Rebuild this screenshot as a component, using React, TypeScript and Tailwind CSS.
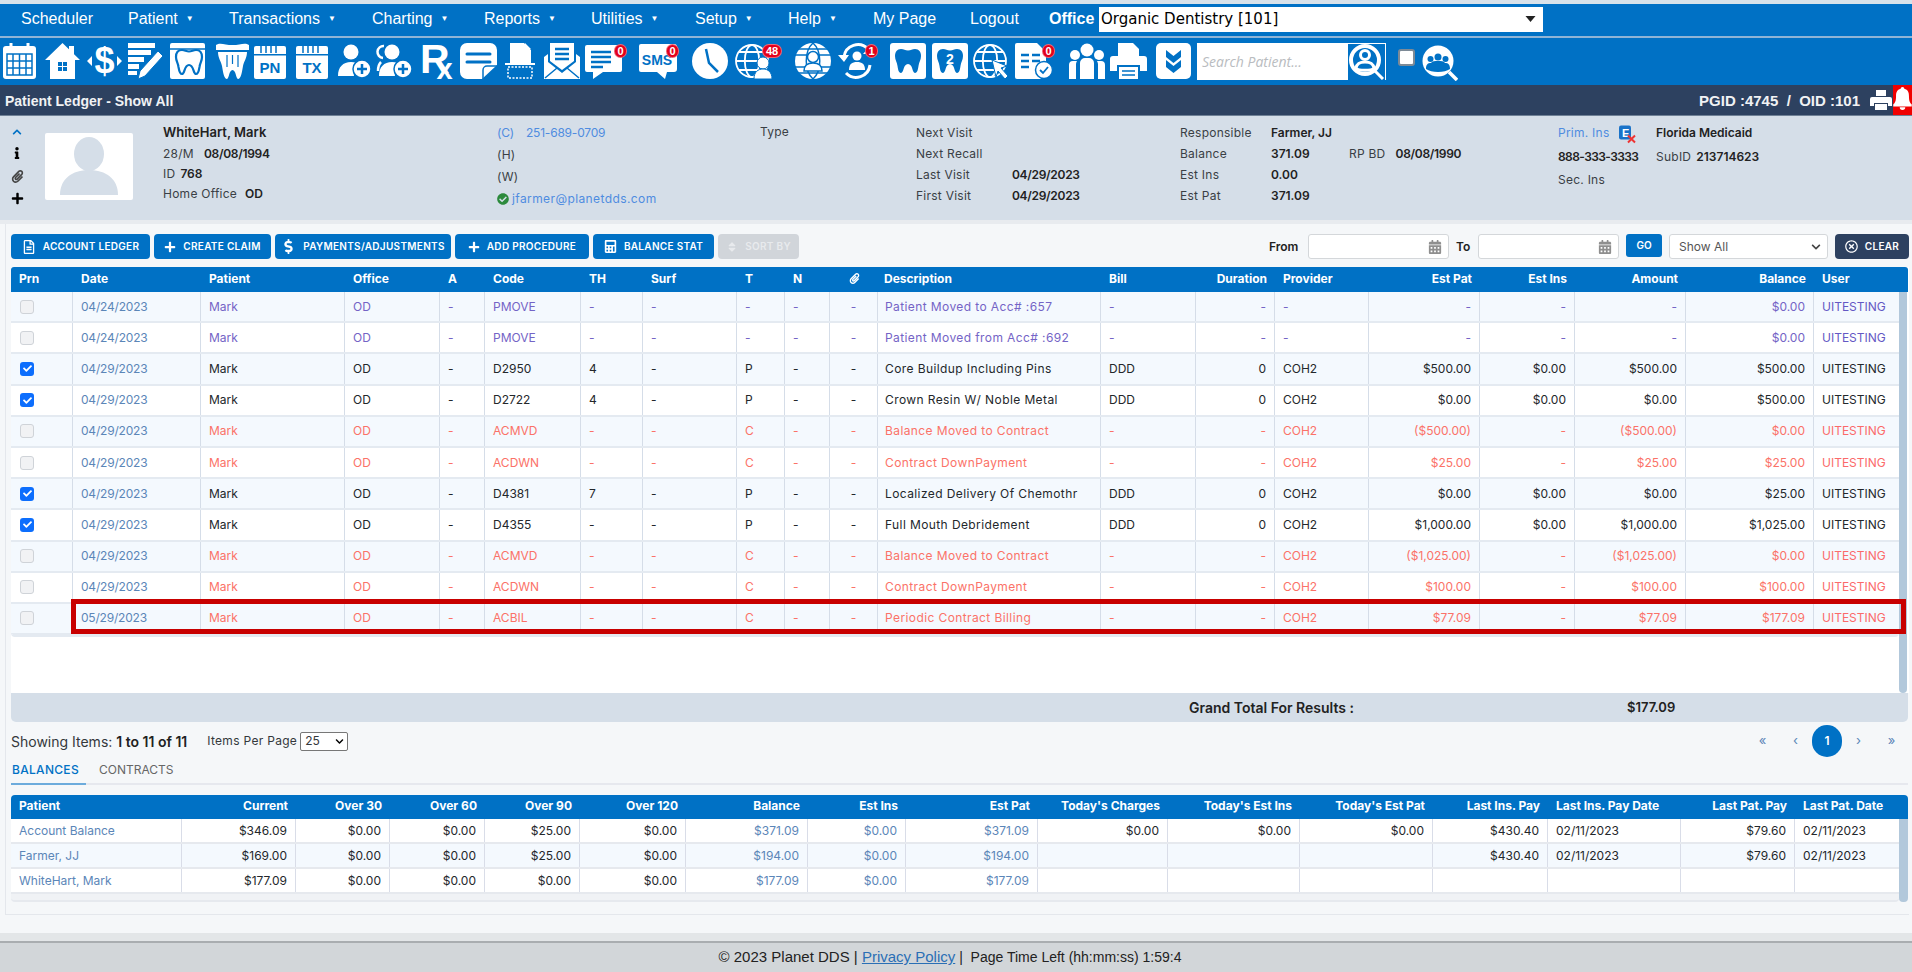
import type { ReactNode } from 'react';
import {
  FaCalculator,
  FaCalendarAlt,
  FaCheck,
  FaCheckCircle,
  FaChevronDown,
  FaChevronUp,
  FaDollarSign,
  FaInfo,
  FaPaperclip,
  FaPlus,
  FaRegFileAlt,
  FaRegTimesCircle,
  FaSort,
} from 'react-icons/fa';

const BLUE = '#0071c5';

// column tracks shared by header and rows of the ledger
const ledgerCols =
  'grid grid-cols-[62px_128px_144px_95px_45px_96px_62px_94px_48px_45px_48px_223px_95px_79px_94px_111px_95px_111px_128px_85px]';
const balanceCols =
  'grid grid-cols-[171px_114px_94px_95px_95px_106px_122px_98px_132px_130px_132px_133px_115px_133px_114px_104px]';

type Kind = 'moved' | 'proc' | 'contract';

interface Row {
  kind: Kind;
  date: string;
  code: string;
  th?: string;
  t: string;
  desc: string;
  bill: string;
  dur: string;
  prov: string;
  estPat: string;
  estIns: string;
  amount: string;
  bal: string;
}

const rows: Row[] = [
  { kind: 'moved', date: '04/24/2023', code: 'PMOVE', t: '-', desc: 'Patient Moved to Acc# :657', bill: '-', dur: '-', prov: '-', estPat: '-', estIns: '-', amount: '-', bal: '$0.00' },
  { kind: 'moved', date: '04/24/2023', code: 'PMOVE', t: '-', desc: 'Patient Moved from Acc# :692', bill: '-', dur: '-', prov: '-', estPat: '-', estIns: '-', amount: '-', bal: '$0.00' },
  { kind: 'proc', date: '04/29/2023', code: 'D2950', th: '4', t: 'P', desc: 'Core Buildup Including Pins', bill: 'DDD', dur: '0', prov: 'COH2', estPat: '$500.00', estIns: '$0.00', amount: '$500.00', bal: '$500.00' },
  { kind: 'proc', date: '04/29/2023', code: 'D2722', th: '4', t: 'P', desc: 'Crown Resin W/ Noble Metal', bill: 'DDD', dur: '0', prov: 'COH2', estPat: '$0.00', estIns: '$0.00', amount: '$0.00', bal: '$500.00' },
  { kind: 'contract', date: '04/29/2023', code: 'ACMVD', t: 'C', desc: 'Balance Moved to Contract', bill: '-', dur: '-', prov: 'COH2', estPat: '($500.00)', estIns: '-', amount: '($500.00)', bal: '$0.00' },
  { kind: 'contract', date: '04/29/2023', code: 'ACDWN', t: 'C', desc: 'Contract DownPayment', bill: '-', dur: '-', prov: 'COH2', estPat: '$25.00', estIns: '-', amount: '$25.00', bal: '$25.00' },
  { kind: 'proc', date: '04/29/2023', code: 'D4381', th: '7', t: 'P', desc: 'Localized Delivery Of Chemothr', bill: 'DDD', dur: '0', prov: 'COH2', estPat: '$0.00', estIns: '$0.00', amount: '$0.00', bal: '$25.00' },
  { kind: 'proc', date: '04/29/2023', code: 'D4355', t: 'P', desc: 'Full Mouth Debridement', bill: 'DDD', dur: '0', prov: 'COH2', estPat: '$1,000.00', estIns: '$0.00', amount: '$1,000.00', bal: '$1,025.00' },
  { kind: 'contract', date: '04/29/2023', code: 'ACMVD', t: 'C', desc: 'Balance Moved to Contract', bill: '-', dur: '-', prov: 'COH2', estPat: '($1,025.00)', estIns: '-', amount: '($1,025.00)', bal: '$0.00' },
  { kind: 'contract', date: '04/29/2023', code: 'ACDWN', t: 'C', desc: 'Contract DownPayment', bill: '-', dur: '-', prov: 'COH2', estPat: '$100.00', estIns: '-', amount: '$100.00', bal: '$100.00' },
  { kind: 'contract', date: '05/29/2023', code: 'ACBIL', t: 'C', desc: 'Periodic Contract Billing', bill: '-', dur: '-', prov: 'COH2', estPat: '$77.09', estIns: '-', amount: '$77.09', bal: '$177.09' },
];

const kindColor: Record<Kind, string> = {
  moved: 'text-[#7464c6]',
  proc: 'text-[#23272b]',
  contract: 'text-[#fb7268]',
};

const balances = [
  ['Account Balance', '$346.09', '$0.00', '$0.00', '$25.00', '$0.00', '$371.09', '$0.00', '$371.09', '$0.00', '$0.00', '$0.00', '$430.40', '02/11/2023', '$79.60', '02/11/2023'],
  ['Farmer, JJ', '$169.00', '$0.00', '$0.00', '$25.00', '$0.00', '$194.00', '$0.00', '$194.00', '', '', '', '$430.40', '02/11/2023', '$79.60', '02/11/2023'],
  ['WhiteHart, Mark', '$177.09', '$0.00', '$0.00', '$0.00', '$0.00', '$177.09', '$0.00', '$177.09', '', '', '', '', '', '', ''],
];

const balanceHeads = ['Patient', 'Current', 'Over 30', 'Over 60', 'Over 90', 'Over 120', 'Balance', 'Est Ins', 'Est Pat', "Today's Charges", "Today's Est Ins", "Today's Est Pat", 'Last Ins. Pay', 'Last Ins. Pay Date', 'Last Pat. Pay', 'Last Pat. Date'];

const tooth =
  'M11 7c-4 0-6 3-6 7 0 4 2 6 2.500 10 .5 3 1 7 3.500 7 3 0 2-9 7-9s4 9 7 9c2.500 0 3-4 3.500-7 .5-4 2.500-6 2.500-10 0-4-2-7-6-7-3 0-4 1.500-7 1.500S14 7 11 7z';

function Svg({ children, w = 36 }: { children: ReactNode; w?: number }) {
  return (
    <svg viewBox={`0 0 ${w} 36`} width={w} height={36} fill="#fff" className="overflow-visible">
      {children}
    </svg>
  );
}

function CalendarTile({ label }: { label: string }) {
  return (
    <Svg w={34}>
      <rect x="1" y="3" width="32" height="33" rx="2" />
      <path d="M8 0v10M13 0v10M18 0v10M23 0v10" stroke={BLUE} strokeWidth="1.500" />
      <rect x="1" y="11" width="32" height="1.500" fill={BLUE} />
      <text x="17" y="30" textAnchor="middle" fontSize="15" fontWeight="700" fontFamily="Liberation Sans, sans-serif" fill={BLUE}>
        {label}
      </text>
    </Svg>
  );
}

function Globe({ x = 18, r = 17 }: { x?: number; r?: number }) {
  return (
    <g fill="none" stroke="#fff" strokeWidth="1.800">
      <circle cx={x} cy="18" r={r} />
      <ellipse cx={x} cy="18" rx={r * 0.45} ry={r} />
      <path d={`M${x - r} 18h${r * 2}M${x - r + 3} 9h${r * 2 - 6}M${x - r + 3} 27h${r * 2 - 6}`} />
    </g>
  );
}

function PersonPlus({ two }: { two?: boolean }) {
  return (
    <Svg>
      {two && <path d="M7 3a6 6 0 0 0-1 12M4 19c-2 2-3 5-3 9" fill="none" stroke="#fff" strokeWidth="2.500" />}
      <circle cx="15" cy="9" r="7.500" />
      <path d="M2 33c0-9 5-14 13-14 4 0 7 1 9 3-5 2-7 6-6 11z" />
      <circle cx="26" cy="26" r="9" fill="#fff" stroke={BLUE} strokeWidth="1.500" />
      <path d="M26 21v10M21 26h10" stroke={BLUE} strokeWidth="2.500" />
    </Svg>
  );
}

const icons: { className: string; node: ReactNode; badge?: { text: string; className: string } }[] = [
  {
    className: 'ml-[3px] w-[33px]',
    node: (
      <Svg w={33}>
        <rect x="0" y="3" width="33" height="33" rx="3" />
        <path d="M8 0v8M25 0v8" stroke="#fff" strokeWidth="3" />
        <path d="M4 11h25v21H4zM4 18h25M4 25h25M10 11v21M16.500 11v21M23 11v21" fill="none" stroke={BLUE} strokeWidth="1.500" />
      </Svg>
    ),
  },
  {
    className: 'ml-[9px] w-[35px]',
    node: (
      <Svg w={35}>
        <path d="M17.500 0 35 17h-5v19H5V17H0zM24 3h5v9l-5-5z" />
        <rect x="13" y="19" width="9" height="9" fill={BLUE} />
        <path d="M17.500 19v9M13 23.500h9" stroke="#fff" strokeWidth="1" />
      </Svg>
    ),
  },
  {
    className: 'ml-[7px] w-[35px]',
    node: (
      <Svg w={35}>
        <text x="17.500" y="30" textAnchor="middle" fontSize="36" fontWeight="700" fontFamily="Liberation Sans, sans-serif">
          $
        </text>
        <path d="M0 18l5-5v10zM35 18l-5-5v10z" />
      </Svg>
    ),
  },
  {
    className: 'ml-[6px] w-[35px]',
    node: (
      <Svg w={35}>
        <path d="M0 0h27v5H0zM0 7h23v5H0zM0 14h16v5H0zM0 21h11v5H0zM0 28h9v4H0z" />
        <path d="M30 8l5 5-18 20-7 3 2-8z" stroke={BLUE} strokeWidth="1" />
      </Svg>
    ),
  },
  {
    className: 'ml-[7px] w-[35px]',
    node: (
      <Svg w={35}>
        <rect x="0" y="0" width="35" height="36" rx="2" />
        <path d="M0 6h35" stroke={BLUE} strokeWidth="1.500" />
        <path d={tooth} fill="#fff" stroke={BLUE} strokeWidth="2.200" transform="translate(1 0)" />
      </Svg>
    ),
  },
  {
    className: 'ml-[10px] w-[35px]',
    node: (
      <Svg w={35}>
        <path d="M1 2c4-3 9 0 16.500 0S30-1 34 2v5H1z" />
        <path d="M3 9h29c0 6-3 9-4 14-1 6-2 13-5 13-2 0-2-9-5.500-9S14 36 12 36c-3 0-4-7-5-13C6 18 3 15 3 9z" />
        <path d="M12 12v12M17.500 12v9M23 12v12" stroke={BLUE} strokeWidth="1.200" />
      </Svg>
    ),
  },
  { className: 'ml-[3px] w-[34px]', node: <CalendarTile label="PN" /> },
  { className: 'ml-[8px] w-[34px]', node: <CalendarTile label="TX" /> },
  { className: 'ml-[7px] w-[36px]', node: <PersonPlus /> },
  { className: 'ml-[5px] w-[36px]', node: <PersonPlus two /> },
  {
    className: 'ml-[7px] w-[33px]',
    node: (
      <Svg w={34}>
        <text x="0" y="30" fontSize="41" fontWeight="700" fontFamily="Liberation Sans, sans-serif">
          R
          <tspan dx="-13" dy="6" fontSize="29">
            x
          </tspan>
        </text>
      </Svg>
    ),
  },
  {
    className: 'ml-[7px] w-[37px]',
    node: (
      <Svg w={37}>
        <path d="M7 0h23a7 7 0 0 1 7 7v15L22 36H7a7 7 0 0 1-7-7V7a7 7 0 0 1 7-7z" />
        <path d="M7 11h23M7 19h23" stroke={BLUE} strokeWidth="3" strokeLinecap="round" />
        <path d="M37 23H27a4 4 0 0 0-4 4v9" fill="none" stroke={BLUE} strokeWidth="1.500" />
      </Svg>
    ),
  },
  {
    className: 'ml-[8px] w-[30px]',
    node: (
      <Svg w={30}>
        <path d="M5 0h14l7 7v13H5zM20 0l6 6h-6z" />
        <path d="M0 20h30v2H0z" />
        <rect x="3" y="24" width="24" height="11" fill="none" stroke="#fff" strokeWidth="1.500" strokeDasharray="2 1.500" />
      </Svg>
    ),
  },
  {
    className: 'ml-[9px] w-[36px]',
    node: (
      <Svg>
        <path d="M6 0h24v18l-12 9-12-9z" />
        <path d="M11 6h14M11 11h14M11 16h14" stroke={BLUE} strokeWidth="2.500" />
        <path d="M0 14l4-3v8l14 11 14-11v-8l4 3v22H0z" />
        <path d="M1 35l12-10M35 35L23 25" stroke={BLUE} strokeWidth="1.500" />
      </Svg>
    ),
  },
  {
    className: 'ml-[5px] w-[40px]',
    node: (
      <Svg w={40}>
        <path d="M2 2h33a2 2 0 0 1 2 2v23a2 2 0 0 1-2 2H18L8 36v-7H2a2 2 0 0 1-2-2V4a2 2 0 0 1 2-2z" />
        <path d="M6 9h20M6 14h20M6 19h20M6 24h12" stroke={BLUE} strokeWidth="2.500" />
      </Svg>
    ),
    badge: { text: '0', className: 'right-[-2px] w-[13px]' },
  },
  {
    className: 'ml-[14px] w-[39px]',
    node: (
      <Svg w={39}>
        <path d="M2 1h33a3 3 0 0 1 3 3v22a3 3 0 0 1-3 3H28l-2 7-8-7H2a2 2 0 0 1-2-2V3a2 2 0 0 1 2-2z" />
        <text x="18" y="22" textAnchor="middle" fontSize="14" fontWeight="700" fontFamily="Liberation Sans, sans-serif" fill={BLUE}>
          SMS
        </text>
      </Svg>
    ),
    badge: { text: '0', className: 'right-[-1px] w-[13px]' },
  },
  {
    className: 'ml-[14px] w-[36px]',
    node: (
      <Svg>
        <circle cx="18" cy="18" r="18" />
        <path d="M14 6l3 14 9 9" fill="none" stroke={BLUE} strokeWidth="2.500" />
      </Svg>
    ),
  },
  {
    className: 'ml-[7px] w-[46px]',
    node: (
      <Svg w={46}>
        <Globe x={17} r={16} />
        <circle cx="28" cy="20" r="6" stroke={BLUE} />
        <path d="M19 36c0-7 4-10 9-10s9 3 9 10z" stroke={BLUE} />
      </Svg>
    ),
    badge: { text: '48', className: 'right-[-1px] w-[20px]' },
  },
  {
    className: 'ml-[14px] w-[36px]',
    node: (
      <Svg>
        <circle cx="18" cy="18" r="18" />
        <path d="M0 12h36M0 24h36M3 6h30M3 30h30M18 0c-9 8-9 28 0 36M18 0c9 8 9 28 0 36" fill="none" stroke={BLUE} strokeWidth="1.500" />
        <circle cx="18" cy="14" r="5.500" stroke={BLUE} strokeWidth="1.500" />
        <path d="M9 28c0-6 4-8 9-8s9 2 9 8z" stroke={BLUE} strokeWidth="1.500" />
      </Svg>
    ),
  },
  {
    className: 'ml-[7px] w-[39px]',
    node: (
      <Svg w={39}>
        <path d="M6 14A14 14 0 0 1 30 6M32 22A14 14 0 0 1 8 30" fill="none" stroke="#fff" strokeWidth="3" />
        <path d="M0 12h11l-5 7zM33 2v9h-8z" />
        <circle cx="19" cy="13" r="4.500" />
        <path d="M11 27c0-6 3-8 8-8s8 2 8 8z" />
      </Svg>
    ),
    badge: { text: '1', className: 'right-[-1px] w-[13px]' },
  },
  {
    className: 'ml-[13px] w-[36px]',
    node: (
      <Svg>
        <rect width="36" height="36" rx="3" />
        <path d={tooth} fill={BLUE} transform="translate(0 -1)" />
      </Svg>
    ),
  },
  {
    className: 'ml-[6px] w-[36px]',
    node: (
      <Svg>
        <rect width="36" height="36" rx="3" />
        <path d={tooth} fill={BLUE} transform="translate(0 -1)" />
        <text x="18" y="21" textAnchor="middle" fontSize="14" fontWeight="700" fontFamily="Liberation Sans, sans-serif" fill="#fff">
          2
        </text>
      </Svg>
    ),
  },
  {
    className: 'ml-[5px] w-[36px]',
    node: (
      <Svg>
        <Globe x={17} r={16} />
        <path d="M19 17l15 6-6 2 7 8-3 3-7-8-2 6z" stroke={BLUE} />
      </Svg>
    ),
  },
  {
    className: 'ml-[6px] w-[39px]',
    node: (
      <Svg w={39}>
        <path d="M2 0h20l9 9v27H2a2 2 0 0 1-2-2V2a2 2 0 0 1 2-2z" />
        <path d="M6 12h8M17 12h8M6 18h8M17 18h8M6 24h8" stroke={BLUE} strokeWidth="2.500" />
        <circle cx="29" cy="27" r="8.500" stroke={BLUE} strokeWidth="1.500" />
        <path d="M25 27l3 3 5-6" fill="none" stroke={BLUE} strokeWidth="1.800" />
      </Svg>
    ),
    badge: { text: '0', className: 'right-[-1px] w-[13px]' },
  },
  {
    className: 'ml-[15px] w-[36px]',
    node: (
      <Svg>
        <circle cx="18" cy="7" r="6.500" />
        <circle cx="6" cy="12" r="5" />
        <circle cx="30" cy="12" r="5" />
        <path d="M11 36V20a5 5 0 0 1 5-5h4a5 5 0 0 1 5 5v16zM0 36V22a4 4 0 0 1 4-4h4a7 7 0 0 0-1 3v15zM36 36V22a4 4 0 0 0-4-4h-4a7 7 0 0 1 1 3v15z" />
      </Svg>
    ),
  },
  {
    className: 'ml-[5px] w-[37px]',
    node: (
      <Svg w={37}>
        <path d="M8 0h15l6 6v7H8z" />
        <path d="M3 13h31a3 3 0 0 1 3 3v12h-7v-6H7v6H0V16a3 3 0 0 1 3-3z" />
        <path d="M9 24h19v12H9z" />
        <path d="M12 28h13M12 32h13" stroke={BLUE} strokeWidth="1.500" />
      </Svg>
    ),
  },
  {
    className: 'ml-[9px] w-[35px]',
    node: (
      <Svg w={35}>
        <rect width="35" height="36" rx="5" />
        <path d="M10 7l7.500 6 7.500-6v7l-7.500 6-7.500-6zM10 17l7.500 6 7.500-6v7l-7.500 6-7.500-6z" fill={BLUE} />
      </Svg>
    ),
  },
];

function NavItem({ label, caret, className }: { label: string; caret?: boolean; className: string }) {
  return (
    <span className={`flex shrink-0 items-center ${className}`}>
      {label}
      {caret && <span className="ml-[8px] text-[8px]">▼</span>}
    </span>
  );
}

function Btn({ icon, label, className }: { icon: ReactNode; label: string; className: string }) {
  return (
    <button className={`flex h-[25px] items-center justify-center gap-[7px] rounded-[4px] bg-[#0071c5] text-[10px] font-semibold tracking-[0.3px] text-white ${className}`}>
      {icon}
      {label}
    </button>
  );
}

function Info({ label, value, className = '' }: { label: string; value?: string; className?: string }) {
  return (
    <div className={`flex h-[21px] items-center ${className}`}>
      <span className="w-[96px] shrink-0">{label}</span>
      <span className="font-semibold tracking-[-0.3px] text-[#222]">{value}</span>
    </div>
  );
}

function DateBox({ className }: { className: string }) {
  return (
    <div className={`flex h-[25px] items-center justify-end rounded-[3px] border border-[#d4d7da] bg-white pr-[6px] ${className}`}>
      <FaCalendarAlt className="text-[14px] text-[#8e8e8e]" />
    </div>
  );
}

const ledgerHeads: [string, boolean][] = [
  ['Prn', false], ['Date', false], ['Patient', false], ['Office', false], ['A', false], ['Code', false], ['TH', false], ['Surf', false], ['T', false], ['N', false], ['', false],
  ['Description', false], ['Bill', false], ['Duration', true], ['Provider', false], ['Est Pat', true], ['Est Ins', true], ['Amount', true], ['Balance', true], ['User', false],
];

function Ledger() {
  return (
    <div className="relative bg-white">
      <div className={`${ledgerCols} h-[25px] w-[1897px] items-center rounded-t-[3px] bg-[#0071c5] pb-[2px] text-[12px] font-bold text-white`}>
        {ledgerHeads.map(([h, right], i) => (
          <div key={i} className={`${i === 11 ? 'pl-[6px]' : 'px-2'} ${right ? 'text-right' : ''}`}>
            {i === 10 ? <FaPaperclip className="mx-auto text-[11px]" /> : h}
          </div>
        ))}
      </div>
      <div className="flex h-[401px] items-start">
        <div className="w-[1888px] overflow-hidden rounded-b-[4px] border-b-2 border-[#e4eaf1]">
          {rows.map((r, i) => {
            const tone = kindColor[r.kind];
            const cells: string[] = ['Mark', 'OD', '-', r.code, r.th ?? '-', '-', r.t, '-'];
            const tail: [string, boolean][] = [
              [r.bill, false], [r.dur, true], [r.prov, false], [r.estPat, true], [r.estIns, true], [r.amount, true], [r.bal, true],
            ];
            return (
              <div key={i} className={`${ledgerCols} h-[31.2px] border-b-2 border-[#e4eaf1] ${i % 2 === 0 ? 'bg-[#f4f9fe]' : 'bg-white'} ${tone}`}>
                <div className="flex items-center border-r border-[#d5dde8] pl-[9px]">
                  {r.kind === 'proc' ? (
                    <span className="flex h-[14px] w-[14px] items-center justify-center rounded-[3px] bg-[#0d6efd] text-[9px] text-white">
                      <FaCheck />
                    </span>
                  ) : (
                    <span className="h-[14px] w-[14px] rounded-[3px] border border-[#cfd3d8] bg-[#f1f2f4]" />
                  )}
                </div>
                <div className="flex items-center border-r border-[#d5dde8] pl-[8px] tracking-[-0.2px] text-[#5b86b8]">{r.date}</div>
                {cells.map((c, j) => (
                  <div key={j} className="flex items-center border-r border-[#d5dde8] pl-[8px]">
                    {c}
                  </div>
                ))}
                <div className="flex items-center justify-center border-r border-[#d5dde8]">-</div>
                <div className="flex items-center border-r border-[#d5dde8] pl-[7px] tracking-[0.4px]">{r.desc}</div>
                {tail.map(([c, right], j) => (
                  <div key={j} className={`flex items-center border-r border-[#d5dde8] px-[8px] ${right ? 'justify-end' : ''}`}>
                    {c}
                  </div>
                ))}
                <div className="flex items-center pl-[8px] text-[#6458c4]">{r.kind === 'contract' ? <span className="text-[#fb6a6a]">UITESTING</span> : r.kind === 'proc' ? <span className="text-[#23272b]">UITESTING</span> : 'UITESTING'}</div>
              </div>
            );
          })}
        </div>
        <div className="h-full w-[8px] rounded-b-[4px] bg-[#b2c8db]" />
      </div>
      {/* highlight drawn over the last row */}
      <div className="absolute left-[60px] top-[332px] h-[35px] w-[1835px] border-[5px] border-[#c80000]" />
    </div>
  );
}

function Balances() {
  return (
    <div>
      <div className={`${balanceCols} h-[24px] w-[1897px] items-center rounded-t-[4px] bg-[#0071c5] pb-[2px] text-[12px] font-bold text-white`}>
        {balanceHeads.map((h, i) => (
          <div key={h} className={`whitespace-nowrap px-2 ${i === 0 || i === 13 || i === 15 ? '' : 'text-right'}`}>
            {h}
          </div>
        ))}
      </div>
      <div className="flex items-stretch">
        <div className="w-[1888px] rounded-b-[4px] border-b-2 border-[#e6e9ee] bg-[#f0f2f5] pb-[6px]">
          {balances.map((row, i) => (
            <div key={i} className={`${balanceCols} h-[25px] border-b-2 border-[#e6e9ee] ${i === 1 ? 'bg-[#f4f9fe]' : 'bg-white'}`}>
              {row.map((c, j) => {
                const blue = j === 0 || j === 6 || j === 7 || j === 8;
                const left = j === 0 || j === 13 || j === 15;
                return (
                  <div key={j} className={`flex items-center px-[8px] ${left ? '' : 'justify-end'} ${j < 15 ? 'border-r border-[#d9dde8]' : ''} ${blue ? 'text-[#5b86b8]' : 'text-[#23272b]'}`}>
                    {c}
                  </div>
                );
              })}
            </div>
          ))}
        </div>
        <div className="w-[9px] rounded-b-[4px] bg-[#b2c8db]" />
      </div>
    </div>
  );
}

export default function App() {
  return (
    <div className="flex h-[972px] w-[1912px] flex-col overflow-hidden bg-[#f5f7f9] font-[Inter,sans-serif] text-[12px] text-[#34383c]">
      <div className="h-[4px] bg-[#d8e2ea]" />

      {/* main menu */}
      <nav className="flex h-[32px] items-center bg-[#0071c5] pb-[2px] font-['Liberation_Sans',sans-serif] text-[16px] text-white">
        <NavItem label="Scheduler" className="ml-[21px] w-[107px]" />
        <NavItem label="Patient" caret className="w-[101px]" />
        <NavItem label="Transactions" caret className="w-[143px]" />
        <NavItem label="Charting" caret className="w-[112px]" />
        <NavItem label="Reports" caret className="w-[107px]" />
        <NavItem label="Utilities" caret className="w-[104px]" />
        <NavItem label="Setup" caret className="w-[93px]" />
        <NavItem label="Help" caret className="w-[85px]" />
        <NavItem label="My Page" className="w-[97px]" />
        <NavItem label="Logout" className="w-[79px]" />
        <span className="w-[50px] shrink-0 font-bold">Office</span>
        <div className="flex h-[25px] w-[444px] items-center justify-between bg-white pl-[2px] pr-[7px] font-['DejaVu_Sans',sans-serif] text-[15px] text-black">
          Organic Dentistry [101]
          <svg viewBox="0 0 10 6" className="h-[6px] w-[11px]">
            <path d="M0 0h10L5 6z" fill="#222" />
          </svg>
        </div>
      </nav>
      <div className="h-[2px] bg-[#8fb4d6]" />

      {/* shortcut icons */}
      <div className="flex h-[47px] items-start bg-[#0071c5] pt-[5px]">
        {icons.map((ic, i) => (
          <div key={i} className={`relative h-[36px] shrink-0 ${ic.className}`}>
            {ic.node}
            {ic.badge && (
              <span className={`absolute top-[1px] flex h-[14px] items-center justify-center rounded-full border border-white/40 bg-[#e3001b] font-['Liberation_Sans',sans-serif] text-[11px] font-bold text-white ${ic.badge.className}`}>
                {ic.badge.text}
              </span>
            )}
          </div>
        ))}
        <div className="ml-[6px] flex h-[37px] w-[189px] items-center justify-between border border-white bg-white pl-[4px] font-['Open_Sans',sans-serif] text-[14px] italic text-[#b9bcc0]">
          Search Patient...
          <div className="h-[36px] w-[37px] bg-[#0071c5]">
            <svg viewBox="0 0 37 36" width={37} height={36}>
              <circle cx="17" cy="16" r="14" fill="none" stroke="#fff" strokeWidth="4" />
              <circle cx="17" cy="11" r="4.500" fill="none" stroke="#fff" strokeWidth="3" />
              <path d="M8 24c1-5 4-6 9-6s8 1 9 6c-2 3-16 3-18 0z" fill="none" stroke="#fff" strokeWidth="3" />
              <path d="M27 27l8 8" stroke="#fff" strokeWidth="3" />
            </svg>
          </div>
        </div>
        <span className="ml-[12px] mt-[6px] h-[17px] w-[17px] rounded-[3px] border-2 border-[#7d8a96] bg-white" />
        <div className="ml-[7px] mt-[2px] h-[36px] w-[36px]">
          <svg viewBox="0 0 36 36" width={36} height={36}>
            <circle cx="16" cy="16" r="15.500" fill="#fff" />
            <circle cx="16" cy="12" r="3.500" fill={BLUE} />
            <circle cx="8.500" cy="14" r="3" fill={BLUE} />
            <circle cx="23.500" cy="14" r="3" fill={BLUE} />
            <path d="M4 24c0-5 2-6 5-6 1-2 4-2 7-2s6 0 7 2c3 0 5 1 5 6-3 2-7 3-12 3S7 26 4 24z" fill={BLUE} />
            <path d="M27 27l8 8" stroke="#fff" strokeWidth="3.500" />
          </svg>
        </div>
      </div>

      {/* page title */}
      <div className="flex h-[31px] items-center justify-between border-b border-[#6f8196] bg-[#2d4160] pl-[5px] font-['Liberation_Sans',sans-serif] text-[14px] font-bold text-[#f0f2f4]">
        <span className="pt-[3px]">Patient Ledger - Show All</span>
        <div className="flex items-center">
          <span className="mr-[10px] whitespace-pre pt-[3px] text-[15px]">PGID :4745  /  OID :101</span>
          <svg viewBox="0 0 22 22" className="mr-[1px] h-[22px] w-[22px]" fill="#fff">
            <path d="M6 1h10v6H6zM2 8h18a2 2 0 0 1 2 2v7h-4v-3H4v3H0v-7a2 2 0 0 1 2-2zM5 15h12v6H5z" />
          </svg>
          <div className="flex h-[30px] w-[19px] justify-center overflow-hidden bg-[#f00000] pt-[2px]">
            <svg viewBox="0 0 20 26" className="h-[24px] w-[19px] shrink-0" fill="#fff">
              <path d="M10 0a2 2 0 0 1 2 2c4 1 5 4 5 8 0 5 1 7 3 9v2H0v-2c2-2 3-4 3-9 0-4 1-7 5-8a2 2 0 0 1 2-2zM7 22h6a3 3 0 0 1-6 0z" />
            </svg>
          </div>
        </div>
      </div>

      {/* patient header */}
      <div className="flex h-[104px] bg-[#d5dee8] pt-[6px] text-[12px] tracking-[0.25px] text-[#3a3f45]">
        <div className="ml-[11px] flex w-[12px] flex-col items-center pt-[5px] text-black">
          <FaChevronUp className="text-[10px] text-[#0071c5]" />
          <FaInfo className="mt-[10px] text-[12px]" />
          <FaPaperclip className="mt-[11px] text-[13px] text-[#444]" />
          <FaPlus className="mt-[9px] text-[13px]" />
        </div>
        <div className="ml-[22px] mt-[11px] h-[67px] w-[88px] overflow-hidden rounded-[2px] bg-white">
          <svg viewBox="0 0 88 67" width={88} height={67}>
            <ellipse cx="44" cy="21" rx="15" ry="17" fill="#d5dee8" />
            <path d="M15 62c0-16 12-25 29-25s29 9 29 25z" fill="#d5dee8" />
          </svg>
        </div>
        <div className="ml-[30px] w-[334px]">
          <div className="h-[22px] text-[13px] font-semibold leading-[21px] tracking-normal text-[#222]">WhiteHart, Mark</div>
          <div className="flex h-[20px] items-center gap-[10px]">
            28/M <span className="font-semibold tracking-[-0.3px] text-[#222]">08/08/1994</span>
          </div>
          <div className="flex h-[19px] items-center gap-[5px]">
            ID <span className="font-semibold tracking-normal text-[#222]">768</span>
          </div>
          <div className="flex h-[21px] items-center gap-[8px]">
            Home Office <span className="font-semibold tracking-normal text-[#222]">OD</span>
          </div>
        </div>
        <div className="w-[263px]">
          <div className="flex h-[22px] items-center gap-[12px] tracking-[-0.2px] text-[#4f8ce0]">
            <span>(C)</span> 251-689-0709
          </div>
          <div className="flex h-[22px] items-center">(H)</div>
          <div className="flex h-[22px] items-center">(W)</div>
          <div className="flex h-[22px] items-center gap-[3px] tracking-[0.4px] text-[#4f8ce0]">
            <FaCheckCircle className="text-[12px] text-[#2c8a3c]" /> jfarmer@planetdds.com
          </div>
        </div>
        <div className="w-[156px] pt-[1px]">Type</div>
        <div className="w-[264px]">
          <Info label="Next Visit" />
          <Info label="Next Recall" />
          <Info label="Last Visit" value="04/29/2023" />
          <Info label="First Visit" value="04/29/2023" />
        </div>
        <div className="w-[169px]">
          <div className="flex h-[21px] items-center">
            <span className="w-[91px]">Responsible</span>
            <span className="font-semibold tracking-normal text-[#222]">Farmer, JJ</span>
          </div>
          <div className="flex h-[21px] items-center">
            <span className="w-[91px]">Balance</span>
            <span className="font-semibold tracking-normal text-[#222]">371.09</span>
          </div>
          <div className="flex h-[21px] items-center">
            <span className="w-[91px]">Est Ins</span>
            <span className="font-semibold tracking-normal text-[#222]">0.00</span>
          </div>
          <div className="flex h-[21px] items-center">
            <span className="w-[91px]">Est Pat</span>
            <span className="font-semibold tracking-normal text-[#222]">371.09</span>
          </div>
        </div>
        <div className="flex w-[209px] gap-[10px] pt-[21px]">
          <div className="flex h-[21px] items-center gap-[10px]">
            RP BD <span className="font-semibold tracking-[-0.3px] text-[#222]">08/08/1990</span>
          </div>
        </div>
        <div className="w-[98px]">
          <div className="flex h-[22px] items-center text-[#4f8ce0]">
            Prim. Ins
            <svg viewBox="0 0 18 20" className="ml-[9px] h-[21px] w-[18px]">
              <rect x="0" y="2" width="12" height="14" rx="2" fill="#1a73c9" />
              <text x="3" y="13" fontSize="11" fontWeight="700" fontFamily="Liberation Sans, sans-serif" fill="#fff">
                E
              </text>
              <path d="M9 12l7 7M16 12l-7 7" stroke="#e33" strokeWidth="2" />
            </svg>
          </div>
          <div className="flex h-[25px] items-center font-semibold tracking-[-0.6px] text-[#222]">888-333-3333</div>
          <div className="flex h-[21px] items-center">Sec. Ins</div>
        </div>
        <div>
          <div className="flex h-[22px] items-center font-semibold tracking-normal text-[#222]">Florida Medicaid</div>
          <div className="flex h-[25px] items-center gap-[5px]">
            SubID <span className="font-semibold tracking-normal text-[#222]">213714623</span>
          </div>
        </div>
      </div>
      <div className="h-[4px] bg-[#e8ebef]" />

      {/* ledger panel */}
      <div className="ml-[5px] flex h-[691px] w-[1904px] flex-col border-b border-l border-[#e4e7ec] pl-[5px] pt-[10px]">
        <div className="flex h-[25px] items-center">
          <div className="flex gap-[4px]">
            <Btn icon={<FaRegFileAlt className="text-[14px]" />} label="ACCOUNT LEDGER" className="w-[139px]" />
            <Btn icon={<FaPlus className="text-[12px]" />} label="CREATE CLAIM" className="w-[117px]" />
            <Btn icon={<FaDollarSign className="text-[15px]" />} label="PAYMENTS/ADJUSTMENTS" className="w-[176px]" />
            <Btn icon={<FaPlus className="text-[12px]" />} label="ADD PROCEDURE" className="w-[134px]" />
            <Btn icon={<FaCalculator className="text-[13px]" />} label="BALANCE STAT" className="w-[121px]" />
            <button className="flex h-[25px] w-[81px] items-center justify-center gap-[7px] rounded-[4px] bg-[#d1d5da] text-[10px] font-semibold tracking-[0.3px] text-[#e8eaed]">
              <FaSort className="text-[12px]" />
              SORT BY
            </button>
          </div>
          <span className="ml-[470px] w-[39px] font-semibold text-[#222]">From</span>
          <DateBox className="w-[141px]" />
          <span className="ml-[7px] w-[22px] font-semibold text-[#222]">To</span>
          <DateBox className="w-[141px]" />
          <span className="ml-[7px] flex h-[23px] w-[36px] items-center justify-center self-start rounded-[3px] bg-[#0071c5] text-[10px] font-semibold text-white">GO</span>
          <div className="ml-[7px] flex h-[25px] w-[159px] items-center justify-between rounded-[3px] border border-[#d4d7da] bg-white pl-[9px] pr-[6px] text-[#555]">
            Show All
            <FaChevronDown className="text-[10px] text-[#444]" />
          </div>
          <button className="ml-[7px] flex h-[25px] w-[74px] items-center justify-center gap-[7px] rounded-[4px] bg-[#2d4160] text-[10px] font-semibold tracking-[0.3px] text-white">
            <FaRegTimesCircle className="text-[13px]" />
            CLEAR
          </button>
        </div>

        <div className="mt-[8px]">
          <Ledger />
        </div>

        <div className="flex h-[29px] w-[1897px] items-center rounded-b-[5px] bg-[#d5dee8] font-semibold text-[#222]">
          <span className="ml-[1178px] w-[438px] text-[14px]">Grand Total For Results :</span>
          <span className="text-[13px]">$177.09</span>
        </div>

        <div className="relative flex h-[38px] w-[1897px] items-center">
          <span className="text-[14px]">
            Showing Items: <span className="font-semibold text-[#222]">1 to 11 of 11</span>
          </span>
          <span className="ml-[20px] tracking-[0.3px]">Items Per Page</span>
          <span className="ml-[3px] flex h-[19px] w-[48px] items-center justify-between rounded-[2px] border border-[#777] bg-white pl-[4px] pr-[3px]">
            25 <FaChevronDown className="text-[9px] text-black" />
          </span>
          <div className="ml-auto flex items-center text-[13px] text-[#5b86b8]">
            <span className="w-[33px] text-center">«</span>
            <span className="w-[33px] text-center">‹</span>
            <span className="flex h-[32px] w-[30px] items-center justify-center rounded-full bg-[#0071c5] text-[12px] font-semibold text-white">1</span>
            <span className="w-[33px] text-center">›</span>
            <span className="w-[33px] text-center">»</span>
          </div>
        </div>

        <div className="flex h-[25px] w-[1897px] border-b-2 border-[#e6e8ee] text-[12px]">
          <span className="-mb-[2px] w-[75px] border-b-2 border-[#6cabdc] pl-px pt-[1px] font-medium tracking-[0.3px] text-[#0071c5]">BALANCES</span>
          <span className="ml-[13px] pt-[1px] text-[#666]">CONTRACTS</span>
        </div>

        <div className="mt-[10px]">
          <Balances />
        </div>
      </div>

      <div className="h-[18px]" />
      <div className="h-[8px] bg-[#e3e6e8]" />
      <div className="h-[2px] bg-[#a9adb0]" />
      <footer className="flex h-[29px] items-center justify-center whitespace-pre bg-[#d2d6d9] pr-[12px] font-['Liberation_Sans',sans-serif] text-[14px] text-[#222]">
        <span className="text-[15px]">© 2023 Planet DDS | </span>
        <a className="text-[15px] text-[#2a6fb5] underline">Privacy Policy</a>
        <span> |  Page Time Left (hh:mm:ss) 1:59:4</span>
      </footer>
    </div>
  );
}
